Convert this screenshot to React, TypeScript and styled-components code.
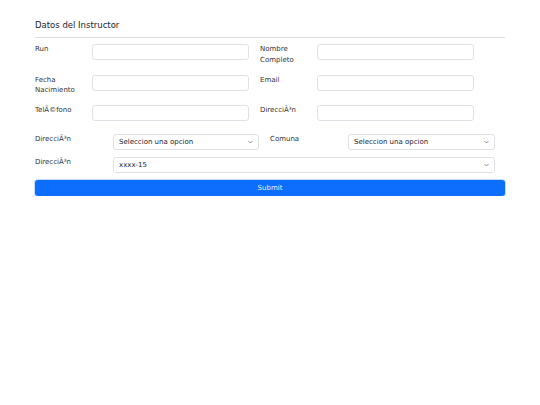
import React from 'react'
import styled, { createGlobalStyle } from 'styled-components'

const GlobalStyle = createGlobalStyle`
  html, body {
    margin: 0;
    padding: 0;
    background: #fff;
  }
  body {
    font-family: 'DejaVu Sans', 'Noto Sans', sans-serif;
    color: #212529;
  }
`

const Page = styled.div`
  width: 470px;
  padding: 19px 35px 0;
`

const Title = styled.h2`
  margin: 0;
  font-size: 8.5px;
  font-weight: normal;
  line-height: 12px;
  color: #212529;
`

const Divider = styled.hr`
  margin: 6px 0 6px;
  border: 0;
  border-top: 1px solid #dcdcdc;
`

const Grid = styled.div`
  display: flex;
  flex-direction: column;
  gap: 9.5px;
`

const Row = styled.div`
  display: flex;
  gap: 11px;
  min-height: 21px;
`

const Field = styled.div<{ $labelWidth: number }>`
  display: flex;
  align-items: flex-start;
  & > label {
    width: ${p => p.$labelWidth}px;
    flex: none;
  }
`

const Label = styled.label`
  font-size: 7px;
  line-height: 10.5px;
  color: #333;
`

const TextInput = styled.input`
  display: block;
  box-sizing: border-box;
  width: 157px;
  height: 16px;
  margin: 0;
  padding: 0 6px;
  border: 1px solid #dee2e6;
  border-radius: 3px;
  background: #fff;
  font: inherit;
  font-size: 7px;
  outline: none;
`

const SelectSection = styled.div`
  display: flex;
  flex-direction: column;
  gap: 7px;
  margin-top: 7.5px;
`

const SelectRow = styled.div`
  display: flex;
  gap: 11px;
`

const SelectBox = styled.div<{ $width: number }>`
  position: relative;
  width: ${p => p.$width}px;
  height: 16px;
`

const NativeSelect = styled.select`
  display: block;
  box-sizing: border-box;
  width: 100%;
  height: 16px;
  margin: 0;
  padding: 0 16px 0 5px;
  border: 1px solid #dee2e6;
  border-radius: 3px;
  background: #fff;
  color: #212529;
  font-family: 'DejaVu Sans', sans-serif;
  font-size: 7px;
  line-height: 14px;
  appearance: none;
  -webkit-appearance: none;
  outline: none;
`

const Chevron = styled.svg`
  position: absolute;
  right: 6px;
  top: 6px;
  width: 5px;
  height: 4px;
  pointer-events: none;
`

const SubmitButton = styled.button`
  display: block;
  width: 100%;
  height: 16px;
  padding: 0;
  border: 0;
  border-radius: 3px;
  background: #0d6efd;
  box-shadow: 0 0 0 1px rgba(13, 110, 253, 0.25);
  color: #e8f0ff;
  font-family: 'DejaVu Sans', sans-serif;
  font-size: 7px;
  cursor: pointer;
`

interface SelectProps {
  width: number
  value: string
  options: string[]
}

const Select: React.FC<SelectProps> = ({ width, value, options }) => (
  <SelectBox $width={width}>
    <NativeSelect defaultValue={value}>
      {options.map(o => (
        <option key={o}>{o}</option>
      ))}
    </NativeSelect>
    <Chevron viewBox="0 0 10 7">
      <path d="M1 1.5 L5 5.5 L9 1.5" fill="none" stroke="#555" strokeWidth="1.3" />
    </Chevron>
  </SelectBox>
)

const textRows: [string, string][] = [
  ['Run', 'Nombre Completo'],
  ['Fecha Nacimiento', 'Email'],
  ['TelÃ©fono', 'DirecciÃ³n'],
]

export default function App() {
  return (
    <>
      <GlobalStyle />
      <Page>
        <Title>Datos del Instructor</Title>
        <Divider />
        <form onSubmit={e => e.preventDefault()}>
          <Grid>
            {textRows.map(([a, b]) => (
              <Row key={a}>
                <Field $labelWidth={57}>
                  <Label>{a}</Label>
                  <TextInput />
                </Field>
                <Field $labelWidth={57}>
                  <Label>{b}</Label>
                  <TextInput />
                </Field>
              </Row>
            ))}
          </Grid>
          <SelectSection>
            <SelectRow>
              <Field $labelWidth={78}>
                <Label>DirecciÃ³n</Label>
                <Select width={146} value="Seleccion una opcion" options={['Seleccion una opcion']} />
              </Field>
              <Field $labelWidth={78}>
                <Label>Comuna</Label>
                <Select width={147} value="Seleccion una opcion" options={['Seleccion una opcion']} />
              </Field>
            </SelectRow>
            <SelectRow>
              <Field $labelWidth={78}>
                <Label>DirecciÃ³n</Label>
                <Select width={382} value="xxxx-15" options={['xxxx-15']} />
              </Field>
            </SelectRow>
            <SubmitButton type="submit">Submit</SubmitButton>
          </SelectSection>
        </form>
      </Page>
    </>
  )
}
